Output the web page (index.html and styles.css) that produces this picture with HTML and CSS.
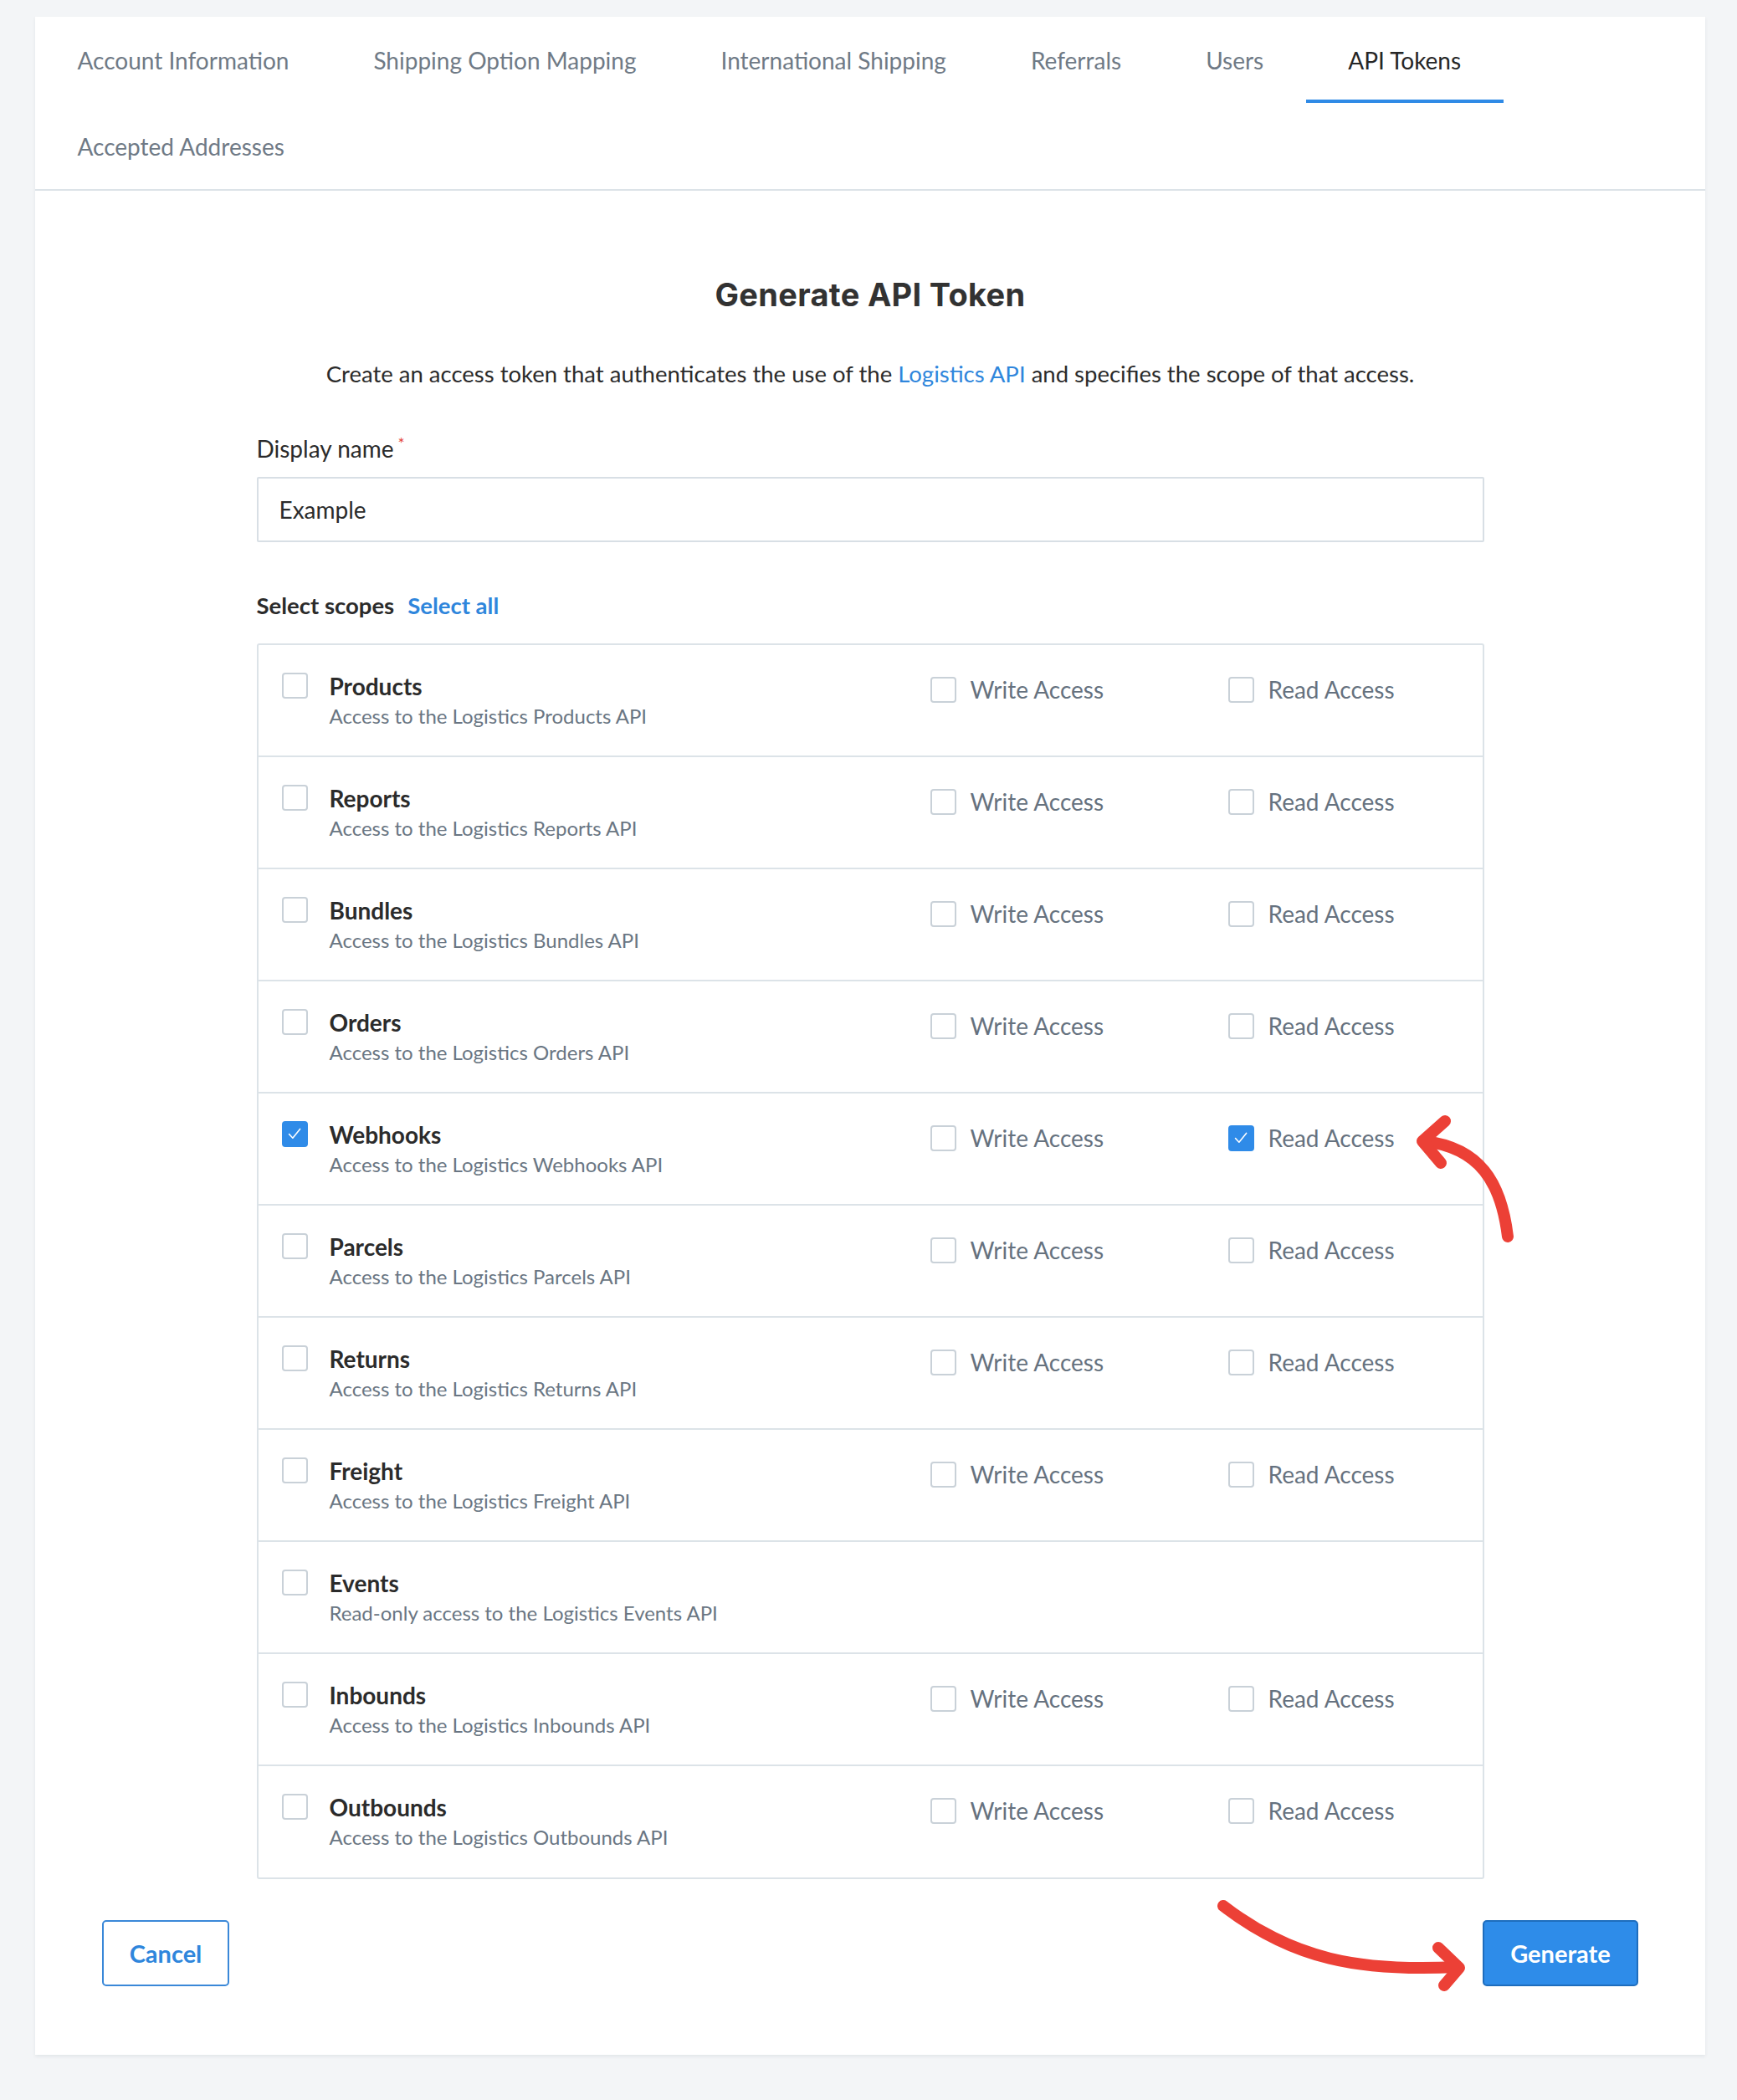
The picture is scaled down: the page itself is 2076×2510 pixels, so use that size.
FILE: index.html
```html
<!DOCTYPE html>
<html lang="en">
<head>
<meta charset="utf-8">
<title>Generate API Token</title>
<link rel="stylesheet" href="styles.css">
</head>
<body>
<div class="card">
  <nav class="tabs">
    <div class="tab">Account Information</div>
    <div class="tab">Shipping Option Mapping</div>
    <div class="tab">International Shipping</div>
    <div class="tab">Referrals</div>
    <div class="tab">Users</div>
    <div class="tab active">API Tokens</div>
    <div class="tab">Accepted Addresses</div>
  </nav>

  <main class="content">
    <h1 class="title">Generate API Token</h1>
    <p class="intro">Create an access token that authenticates the use of the <a class="link">Logistics API</a> and specifies the scope of that access.</p>

    <div class="form">
      <label class="label">Display name<span class="req">*</span></label>
      <div class="input">Example</div>

      <div class="scopes-head"><span class="scopes-label">Select scopes</span><a class="link select-all">Select all</a></div>

      <div class="scopes">
        <div class="row">
          <div class="scope"><span class="cb"></span><div><div class="name">Products</div><div class="desc">Access to the Logistics Products API</div></div></div>
          <div class="perm"><span class="cb"></span><span class="perm-text">Write Access</span></div>
          <div class="perm"><span class="cb"></span><span class="perm-text">Read Access</span></div>
        </div>
        <div class="row">
          <div class="scope"><span class="cb"></span><div><div class="name">Reports</div><div class="desc">Access to the Logistics Reports API</div></div></div>
          <div class="perm"><span class="cb"></span><span class="perm-text">Write Access</span></div>
          <div class="perm"><span class="cb"></span><span class="perm-text">Read Access</span></div>
        </div>
        <div class="row">
          <div class="scope"><span class="cb"></span><div><div class="name">Bundles</div><div class="desc">Access to the Logistics Bundles API</div></div></div>
          <div class="perm"><span class="cb"></span><span class="perm-text">Write Access</span></div>
          <div class="perm"><span class="cb"></span><span class="perm-text">Read Access</span></div>
        </div>
        <div class="row">
          <div class="scope"><span class="cb"></span><div><div class="name">Orders</div><div class="desc">Access to the Logistics Orders API</div></div></div>
          <div class="perm"><span class="cb"></span><span class="perm-text">Write Access</span></div>
          <div class="perm"><span class="cb"></span><span class="perm-text">Read Access</span></div>
        </div>
        <div class="row">
          <div class="scope"><span class="cb checked"><svg viewBox="0 0 31 31"><path d="M7.5 15.5 L12.5 21 L22.5 8.5"/></svg></span><div><div class="name">Webhooks</div><div class="desc">Access to the Logistics Webhooks API</div></div></div>
          <div class="perm"><span class="cb"></span><span class="perm-text">Write Access</span></div>
          <div class="perm"><span class="cb checked"><svg viewBox="0 0 31 31"><path d="M7.5 15.5 L12.5 21 L22.5 8.5"/></svg></span><span class="perm-text">Read Access</span></div>
        </div>
        <div class="row">
          <div class="scope"><span class="cb"></span><div><div class="name">Parcels</div><div class="desc">Access to the Logistics Parcels API</div></div></div>
          <div class="perm"><span class="cb"></span><span class="perm-text">Write Access</span></div>
          <div class="perm"><span class="cb"></span><span class="perm-text">Read Access</span></div>
        </div>
        <div class="row">
          <div class="scope"><span class="cb"></span><div><div class="name">Returns</div><div class="desc">Access to the Logistics Returns API</div></div></div>
          <div class="perm"><span class="cb"></span><span class="perm-text">Write Access</span></div>
          <div class="perm"><span class="cb"></span><span class="perm-text">Read Access</span></div>
        </div>
        <div class="row">
          <div class="scope"><span class="cb"></span><div><div class="name">Freight</div><div class="desc">Access to the Logistics Freight API</div></div></div>
          <div class="perm"><span class="cb"></span><span class="perm-text">Write Access</span></div>
          <div class="perm"><span class="cb"></span><span class="perm-text">Read Access</span></div>
        </div>
        <div class="row">
          <div class="scope"><span class="cb"></span><div><div class="name">Events</div><div class="desc">Read-only access to the Logistics Events API</div></div></div>
        </div>
        <div class="row">
          <div class="scope"><span class="cb"></span><div><div class="name">Inbounds</div><div class="desc">Access to the Logistics Inbounds API</div></div></div>
          <div class="perm"><span class="cb"></span><span class="perm-text">Write Access</span></div>
          <div class="perm"><span class="cb"></span><span class="perm-text">Read Access</span></div>
        </div>
        <div class="row">
          <div class="scope"><span class="cb"></span><div><div class="name">Outbounds</div><div class="desc">Access to the Logistics Outbounds API</div></div></div>
          <div class="perm"><span class="cb"></span><span class="perm-text">Write Access</span></div>
          <div class="perm"><span class="cb"></span><span class="perm-text">Read Access</span></div>
        </div>
      </div>
    </div>

    <div class="actions">
      <button class="btn btn-outline">Cancel</button>
      <button class="btn btn-primary">Generate</button>
    </div>
  </main>
</div>

<svg class="annotations" width="2076" height="2510" viewBox="0 0 2076 2510">
  <path d="M1802 1478 C1794 1412 1768 1372 1703 1364"/>
  <path d="M1727 1340 L1700 1364 L1722 1390"/>
  <path d="M1462 2278 C1545 2342 1625 2357 1742 2351"/>
  <path d="M1719 2328 L1744 2352 L1726 2373"/>
</svg>
</body>
</html>
```

FILE: styles.css
```css
* { box-sizing: border-box; }

html, body {
  margin: 0;
  padding: 0;
}

body {
  background: #f3f5f7;
  font-family: Lato, "Liberation Sans", sans-serif;
  color: #2b2b2b;
  position: relative;
  min-height: 2510px;
  padding-top: 20px;
}

.card {
  margin-left: 42px;
  width: 1996px;
  background: #ffffff;
  box-shadow: 0 2px 4px rgba(30, 45, 60, 0.08);
}

.tabs {
  display: flex;
  flex-wrap: wrap;
  border-bottom: 2px solid #dce3e8;
}

.tab {
  height: 103px;
  padding: 5px 50.5px 0;
  border-bottom: 4px solid transparent;
  display: flex;
  align-items: center;
  font-size: 28px;
  color: #6f7a86;
}

.tab.active {
  color: #262626;
  border-bottom-color: #2f8ae6;
}

.content {
  padding: 102px 80px 82px;
}

.title {
  margin: 0;
  text-align: center;
  font-family: Inter, "Open Sans", sans-serif;
  font-weight: 700;
  font-size: 38px;
  line-height: 44px;
  color: #323232;
  letter-spacing: 0.3px;
}

.intro {
  margin: 55px 0 0;
  text-align: center;
  font-size: 27.5px;
  line-height: 36px;
  color: #2b2b2b;
}

.link {
  color: #2f86dc;
  text-decoration: none;
}

.form {
  width: 1467px;
  margin: 53px auto 0;
}

.label {
  display: block;
  font-size: 28px;
  line-height: 36px;
  color: #2b2b2b;
}

.req {
  color: #e5443b;
  font-size: 19px;
  line-height: 0;
  position: relative;
  top: -10px;
  margin-left: 5px;
}

.input {
  margin-top: 16px;
  height: 78px;
  border: 2px solid #d8dfe5;
  border-radius: 2px;
  padding-left: 25px;
  display: flex;
  align-items: center;
  font-size: 28px;
  color: #2b2b2b;
}

.scopes-head {
  margin-top: 58px;
  font-size: 27.5px;
  line-height: 36px;
  display: flex;
  gap: 16px;
}

.scopes-label {
  font-weight: 700;
  color: #2b2b2b;
}

.select-all {
  font-weight: 700;
}

.scopes {
  margin-top: 27px;
  border: 2px solid #dce3e8;
  border-radius: 3px;
}

.row {
  height: 134px;
  display: grid;
  grid-template-columns: 1fr 356px 304px;
  padding-left: 28px;
  border-bottom: 2px solid #dce3e8;
}

.row:last-child {
  height: 133px;
  border-bottom: none;
}

.scope {
  display: flex;
  gap: 26px;
  padding-top: 33px;
}

.name {
  font-weight: 700;
  font-size: 28px;
  line-height: 32px;
  color: #2b2b2b;
}

.desc {
  font-size: 24px;
  line-height: 40px;
  color: #6a7683;
}

.perm {
  display: flex;
  align-items: flex-start;
  gap: 17px;
  padding-top: 38px;
}

.perm-text {
  font-size: 28px;
  line-height: 31px;
  color: #66727f;
}

.cb {
  flex: none;
  width: 31px;
  height: 31px;
  border: 2px solid #c9d1d8;
  border-radius: 4px;
  background: #ffffff;
  display: block;
}

.cb.checked {
  background: #2f8be8;
  border-color: #2f8be8;
}

.cb svg {
  display: block;
  width: 27px;
  height: 27px;
  fill: none;
  stroke: #ffffff;
  stroke-width: 1.8;
  stroke-linecap: round;
  stroke-linejoin: round;
}

.actions {
  margin-top: 49px;
  display: flex;
  justify-content: space-between;
}

.btn {
  height: 79px;
  border-radius: 5px;
  font-family: Lato, "Liberation Sans", sans-serif;
  font-weight: 700;
  font-size: 29px;
  padding: 0;
  cursor: pointer;
}

.btn-outline {
  width: 152px;
  background: #ffffff;
  border: 2px solid #3a88d8;
  color: #2f86dc;
}

.btn-primary {
  width: 186px;
  background: #2e8ce9;
  border: 2px solid #1e6dbd;
  color: #ffffff;
}

.annotations {
  position: absolute;
  left: 0;
  top: 0;
  pointer-events: none;
  fill: none;
  stroke: #ec4036;
  stroke-width: 14;
  stroke-linecap: round;
  stroke-linejoin: round;
}
```
